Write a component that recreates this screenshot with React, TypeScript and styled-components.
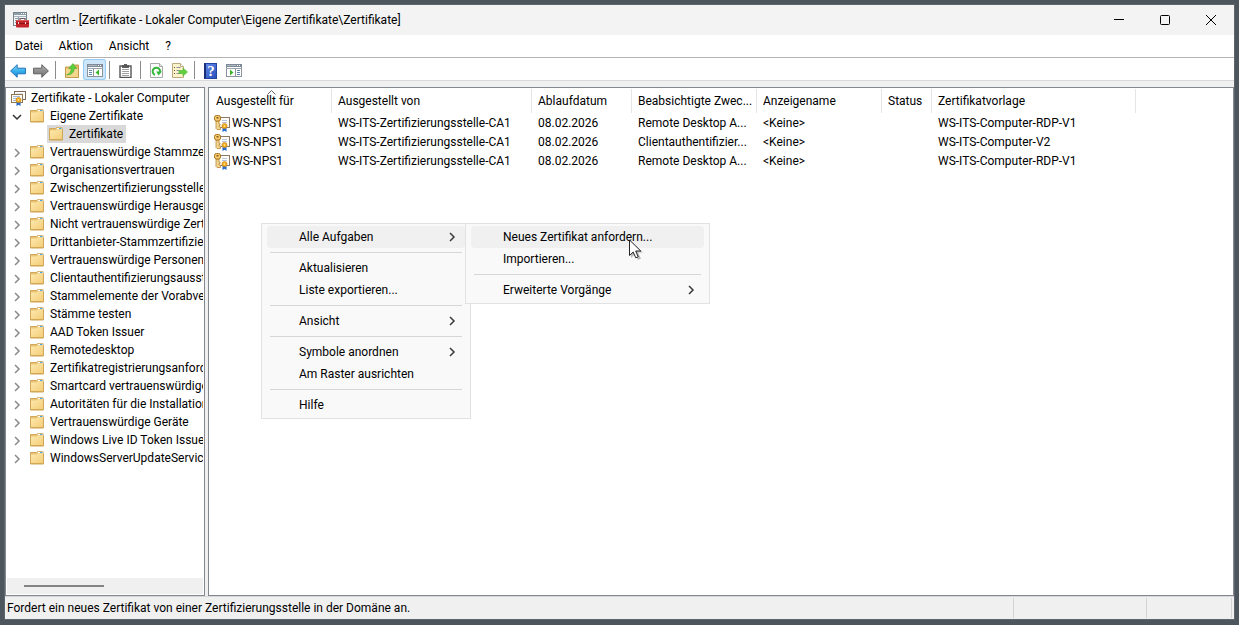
import React from "react";
import styled, { createGlobalStyle, css } from "styled-components";

const GlobalStyle = createGlobalStyle`
  * { box-sizing: border-box; }
  body { margin: 0; background: #4d565d; }
  body, button, table { font-family: Roboto, "Open Sans", sans-serif; font-size: 12px; color: #000; }
  button { border: 0; padding: 0; background: none; text-align: left; }
  ul { list-style: none; margin: 0; padding: 0; }
`;

/* ---------- icons ---------- */

const Icon = styled.svg`
  display: block;
  flex: none;
`;

const AppIcon = () => (
  <Icon width="16" height="16" viewBox="0 0 16 16">
    <rect x="0.5" y="0.5" width="13" height="13" fill="#f4f6f8" stroke="#77858f" />
    <rect x="1" y="1" width="12" height="2" fill="#8fa0ad" />
    <path d="M8 1.5h1M10 1.5h1M12 1.5h1" stroke="#fff" />
    <path d="M1 4.5h12" stroke="#a9b5be" />
    <path d="M2 6.5h3M2 8.5h2M2 10.5h2M5.5 5v8" stroke="#8a99a5" />
    <path d="M7 8V6.500h5V8" fill="none" stroke="#6d5a5e" strokeWidth="1.200" />
    <rect x="3" y="8" width="13" height="7.6" rx="1" fill="#c4252b" />
    <path d="M3.500 8.500h12" stroke="#e0595c" />
    <path d="M3 11.500h13" stroke="#8d1418" />
    <rect x="5" y="10" width="1" height="2" fill="#f3d9d9" />
    <rect x="12" y="10" width="1" height="2" fill="#f3d9d9" />
  </Icon>
);

const ArrowIcon = ({ forward }: { forward?: boolean }) => (
  <Icon width="16" height="14" viewBox="0 0 16 14">
    <defs>
      <linearGradient id={forward ? "fwd" : "back"} x1="0" y1="0" x2="0" y2="1">
        <stop offset="0" stopColor={forward ? "#b5b5b5" : "#8fdcfb"} />
        <stop offset="0.5" stopColor={forward ? "#8e8e8e" : "#35b0ec"} />
        <stop offset="1" stopColor={forward ? "#6e6e6e" : "#1b86d6"} />
      </linearGradient>
    </defs>
    <path
      d={forward ? "M15.4 7 8.800.7v3.500H.6v5.600h8.200v3.500z" : "M.6 7 7.200.7v3.500h8.200v5.600H7.200v3.500z"}
      fill={forward ? "url(#fwd)" : "url(#back)"}
      stroke={forward ? "#5f5f5f" : "#2272b8"}
      strokeLinejoin="round"
    />
  </Icon>
);

const FolderUpIcon = () => (
  <Icon width="14" height="15" viewBox="0 0 14 15">
    <path d="M.5 4h7l1-2h5v12.500H.5z" fill="#e2bb66" stroke="#c49b4c" />
    <path d="M1 5.500h12V14H1z" fill="#f4d68c" />
    <path d="M1.500 12c3.200-1 4.600-3.500 4.800-6.500H3.800L7.800.6l4 4.900H9.300C9 9.500 6.500 12 1.500 12z" fill="#5bd03f" stroke="#3a9e28" strokeWidth="0.500" />
  </Icon>
);

const PaneIcon = ({ right }: { right?: boolean }) => (
  <Icon width="16" height="13" viewBox="0 0 16 13">
    <rect x="0.500" y="0.500" width="15" height="12" fill="#fff" stroke="#8c939b" />
    <rect x="0" y="0" width="16" height="3" fill="#7f8a96" />
    <path d="M1 1.500h9" stroke="#aeb8c2" />
    <path d="M11 1.500h1M13 1.500h1" stroke="#fff" />
    <path d="M0 4.500h16" stroke="#9aa2aa" />
    {right ? (
      <>
        <path d="M9.500 5v7" stroke="#8c939b" />
        <path d="M11 6.500h3M11 8.500h3M11 10.500h3" stroke="#5f86b0" />
        <path d="M4 5.500v6l3.500-3z" fill="#3db52b" />
      </>
    ) : (
      <>
        <path d="M6.500 5v7" stroke="#8c939b" />
        <path d="M2 6.500h3M2 8.500h3M2 10.500h3" stroke="#5f86b0" />
        <path d="M12 5.500v6L8.500 8.500z" fill="#3db52b" />
      </>
    )}
  </Icon>
);

const ClipboardIcon = () => (
  <Icon width="13" height="14" viewBox="0 0 13 14">
    <rect x="1" y="2" width="11" height="11.500" fill="#fff" stroke="#555" strokeWidth="1.400" />
    <rect x="3" y="1" width="7" height="3" fill="#5a5a5a" />
    <rect x="5" y="0" width="3" height="1" fill="#5a5a5a" />
    <path d="M3 5.500h7M3 7.500h7M3 9.500h7M3 11.500h7" stroke="#a0a0a0" />
  </Icon>
);

const RefreshIcon = () => (
  <Icon width="13" height="15" viewBox="0 0 13 15">
    <path d="M.5.500h9l3 3v11H.5z" fill="#fdfdfd" stroke="#a9a9a9" />
    <path d="M9.500.500v3h3" fill="#e6e6e6" stroke="#a9a9a9" />
    <path d="M5 11.800A3.700 3.700 0 1 1 9.800 9.800" fill="none" stroke="#35b83a" strokeWidth="2" />
    <path d="M6.200 8.600h5.600L8.600 12.500z" fill="#35b83a" />
  </Icon>
);

const ExportIcon = () => (
  <Icon width="16" height="15" viewBox="0 0 16 15">
    <path d="M.5.500h8l3 3v11H.5z" fill="#fdf3c9" stroke="#b9ab7f" />
    <path d="M8.500.500v3h3" fill="#fff" stroke="#b9ab7f" />
    <path d="M2 4.500h1M2 7.500h1M2 10.500h1" stroke="#55504a" />
    <path d="M4.500 4.500h4M4.500 7.500h3M4.500 10.500h4" stroke="#8d8fa5" />
    <path d="M7 7.500h4V5l4.500 4-4.500 4v-2.500H7z" fill="#63d13f" stroke="#4bb534" strokeWidth="0.600" />
  </Icon>
);

const HelpBox = styled.span`
  display: grid;
  place-items: center;
  width: 13px;
  height: 16px;
  border: 1px solid #2343a0;
  border-left: 2px solid #1a2f78;
  background: linear-gradient(135deg, #5f88e4, #2a4fbd);
  color: #fff;
  font: bold 15px/14px "Liberation Serif", serif;
`;

const FolderIcon = () => (
  <Icon width="16" height="16" viewBox="0 0 16 16">
    <defs>
      <linearGradient id="folder" x1="0" y1="0" x2="1" y2="1">
        <stop offset="0" stopColor="#fde9ae" />
        <stop offset="1" stopColor="#f3cd78" />
      </linearGradient>
    </defs>
    <path d="M1.500 14V2.500h6l1-1h5.500v2h.5V14z" fill="#e9c472" stroke="#cfa65a" />
    <path d="M9 2.500h5" stroke="#fff" strokeWidth="1.400" />
    <path d="M11 2.500h2.500" stroke="#4aa3dd" />
    <path d="M2 4.500h5.500l1-1H14V13.500H2z" fill="url(#folder)" />
    <path d="M1 13.500h14" stroke="#d3a855" />
  </Icon>
);

const Ribbon = () => (
  <>
    <path d="M8.500 11.500V16l2-1.300 2 1.300v-4.500z" fill="#2468cc" />
    <circle cx="10.500" cy="10" r="2.600" fill="#f0a91e" stroke="#c98a1c" strokeWidth="0.600" />
    <circle cx="10.500" cy="10" r="0.900" fill="#ffdf80" />
  </>
);

const CertStoreIcon = () => (
  <Icon width="16" height="16" viewBox="0 0 16 16">
    <rect x="4.500" y="1.500" width="11" height="8" fill="#fff" stroke="#7d6a58" />
    <path d="M6 3.500h7" stroke="#dfe3ea" />
    <rect x="1.500" y="4.500" width="11" height="8" fill="#fffdf6" stroke="#94774f" />
    <path d="M3 6.500h7M3 8.500h5M3 10.500h3" stroke="#9db8dc" />
    <g transform="translate(-2)"><Ribbon /></g>
  </Icon>
);

const CertIcon = () => (
  <Icon width="16" height="17" viewBox="0 0 16 17">
    <rect x="4.500" y="2.500" width="11" height="10" fill="#fffdf8" stroke="#8d7866" />
    <path d="M8 5.500h5M8 7.500h5" stroke="#b9c4de" />
    <path d="M2 6h3v3h1v1.500H5V12h1.500v2.500H3L2 13.500z" fill="#f3d68f" stroke="#b5863a" strokeWidth="0.800" />
    <rect x="0.500" y="0.500" width="6" height="5.500" rx="2" fill="#f6cd72" stroke="#a9741c" />
    <rect x="2.500" y="2" width="2" height="1.500" fill="#8a5a12" />
    <g transform="translate(0 1)"><Ribbon /></g>
  </Icon>
);

const Chevron = ({ open, color }: { open?: boolean; color: string }) => (
  <Icon width="10" height="10" viewBox="0 0 10 10">
    <path d={open ? "M1 3l4 4 4-4" : "M3 1l4 4-4 4"} fill="none" stroke={color} strokeWidth="1.500" />
  </Icon>
);

/* ---------- window ---------- */

const Desktop = styled.div`
  display: flex;
  min-height: 100vh;
  padding: 5px 5px 6px;
  background: #4d565d;
`;

const Window = styled.main`
  position: relative;
  flex: 1;
  min-width: 0;
  display: flex;
  flex-direction: column;
  background: #f0f0f0;
  box-shadow: 0 0 0 1px #5d666c;
`;

const TitleBar = styled.header`
  display: flex;
  align-items: center;
  height: 30px;
  padding-left: 8px;
  gap: 6px;
  background: #f3f3f3;
`;

const Title = styled.h1`
  flex: 1;
  margin: 0;
  font-size: 12px;
  font-weight: 400;
  line-height: 16px;
  white-space: nowrap;
`;

const WindowButton = styled.button`
  display: grid;
  place-items: center;
  width: 46px;
  height: 30px;
`;

const Controls = styled.div`
  display: flex;
`;

const MenuBar = styled.nav`
  display: flex;
  height: 23px;
  padding-left: 2px;
  background: #fff;
  border-bottom: 1px solid #b4b4b4;
`;

const MenuBarItem = styled.button`
  padding: 0 8px;
  line-height: 22px;
`;

const ToolBar = styled.div`
  display: flex;
  align-items: flex-end;
  height: 23px;
  padding: 0 1px;
  background: #fff;
  border-bottom: 1px solid #d9d9d9;
`;

const ToolButton = styled.button<{ $active?: boolean }>`
  display: grid;
  place-items: center;
  width: 23px;
  height: 21px;
  padding-top: 2px;
  border-radius: 3px;
  ${(p) => p.$active && css`
    background: #cde6f9;
    box-shadow: inset 0 0 0 1px #98ccf3;
  `}
`;

const ToolDivider = styled.span`
  width: 1px;
  height: 18px;
  margin: 0 4px 1px 3px;
  background: #8c8c8c;
`;

const Panels = styled.div`
  flex: 1;
  display: flex;
  gap: 3px;
  padding-top: 6px;
  min-height: 0;
`;

const TreePanel = styled.aside`
  display: flex;
  flex-direction: column;
  flex: none;
  width: 200px;
  padding: 1px;
  background: #fff;
  border: 1px solid #828790;
`;

const Tree = styled.ul`
  flex: 1;
  overflow: hidden;
`;

const TreeRow = styled.li<{ $level: number }>`
  display: flex;
  align-items: center;
  height: 18px;
  padding-left: ${(p) => [3, 5, 40][p.$level]}px;
  white-space: nowrap;
`;

const TreeToggle = styled.button`
  padding-top: 1px;
  margin-right: 7px;
`;

const TreeLabel = styled.span<{ $selected?: boolean }>`
  display: flex;
  align-items: center;
  gap: 5px;
  height: 18px;
  line-height: 18px;
  ${(p) => p.$selected && css`
    padding: 0 3px 0 1px;
    background: #d9d9d9;
  `}
`;

const ScrollTrack = styled.div`
  height: 16px;
  padding: 7px 17px;
  background: #f0f0f0;
`;

const ScrollThumb = styled.div`
  width: 80px;
  height: 2px;
  background: #858585;
`;

const ListPanel = styled.section`
  flex: 1;
  min-width: 0;
  overflow: hidden;
  background: #fff;
  border: 1px solid #828790;
`;

const CertTable = styled.table`
  table-layout: fixed;
  width: 927px;
  border-collapse: collapse;
`;

const Col = styled.col<{ $width: number }>`
  width: ${(p) => p.$width}px;
`;

const HeadCell = styled.th`
  position: relative;
  height: 26px;
  padding: 0 6px;
  font-weight: 400;
  text-align: left;
  white-space: nowrap;
  background: linear-gradient(#e5e5e5, #e5e5e5) right 1px / 1px 24px no-repeat;

  &:first-child { padding-left: 7px; }
`;

const SortMark = styled.svg`
  position: absolute;
  top: 2px;
  left: 58px;
`;

const Cell = styled.td`
  height: 19px;
  padding: 0 6px;
  line-height: 19px;
  white-space: nowrap;

  &:first-child { padding-left: 5px; }
`;

const NameCell = styled.div`
  display: flex;
  align-items: center;
  gap: 2px;
`;

const StatusBar = styled.footer`
  display: flex;
  align-items: center;
  height: 23px;
  padding-right: 2px;
  background: #f0f0f0;
  border-top: 1px solid #d7d7d7;
`;

const StatusText = styled.span`
  flex: 1;
  padding-left: 2px;
  line-height: 20px;
`;

const StatusCell = styled.span<{ $width: number }>`
  width: ${(p) => p.$width}px;
  height: 20px;
  border-left: 1px solid #d4d4d4;
`;

/* ---------- context menus ---------- */

const Menu = styled.div<{ $x: number; $y: number; $width: number }>`
  position: absolute;
  left: ${(p) => p.$x}px;
  top: ${(p) => p.$y}px;
  width: ${(p) => p.$width}px;
  padding: 2px 5px;
  background: #f9f9f9;
  border: 1px solid #e2e2e2;
`;

const MenuItem = styled.button<{ $hot?: boolean }>`
  display: flex;
  align-items: center;
  justify-content: space-between;
  width: 100%;
  height: 22px;
  padding: 0 8px 0 32px;
  border-radius: 4px;
  background: ${(p) => (p.$hot ? "#f0f0f0" : "transparent")};
  white-space: nowrap;
`;

const MenuLine = styled.hr`
  height: 1px;
  margin: 4px 3px;
  border: 0;
  background: #d7d7d7;
`;

const Pointer = styled.svg`
  position: absolute;
  left: 623px;
  top: 234px;
`;

const nodes = [
  "Vertrauenswürdige Stammzer",
  "Organisationsvertrauen",
  "Zwischenzertifizierungsstellen",
  "Vertrauenswürdige Herausgeb",
  "Nicht vertrauenswürdige Zert",
  "Drittanbieter-Stammzertifizie",
  "Vertrauenswürdige Personen",
  "Clientauthentifizierungsausst",
  "Stammelemente der Vorabve",
  "Stämme testen",
  "AAD Token Issuer",
  "Remotedesktop",
  "Zertifikatregistrierungsanford",
  "Smartcard vertrauenswürdige",
  "Autoritäten für die Installation",
  "Vertrauenswürdige Geräte",
  "Windows Live ID Token Issuer",
  "WindowsServerUpdateService",
];

const columns: [string, number][] = [
  ["Ausgestellt für", 123],
  ["Ausgestellt von", 200],
  ["Ablaufdatum", 100],
  ["Beabsichtigte Zwec...", 125],
  ["Anzeigename", 125],
  ["Status", 50],
  ["Zertifikatvorlage", 204],
];

const certs = [
  { purpose: "Remote Desktop A...", template: "WS-ITS-Computer-RDP-V1" },
  { purpose: "Clientauthentifizier...", template: "WS-ITS-Computer-V2" },
  { purpose: "Remote Desktop A...", template: "WS-ITS-Computer-RDP-V1" },
];

type Entry = { label: string; sub?: boolean; hot?: boolean } | null;

const mainMenu: Entry[] = [
  { label: "Alle Aufgaben", sub: true, hot: true },
  null,
  { label: "Aktualisieren" },
  { label: "Liste exportieren..." },
  null,
  { label: "Ansicht", sub: true },
  null,
  { label: "Symbole anordnen", sub: true },
  { label: "Am Raster ausrichten" },
  null,
  { label: "Hilfe" },
];

const taskMenu: Entry[] = [
  { label: "Neues Zertifikat anfordern...", hot: true },
  { label: "Importieren..." },
  null,
  { label: "Erweiterte Vorgänge", sub: true },
];

const ContextMenu = ({ x, y, width, entries }: { x: number; y: number; width: number; entries: Entry[] }) => (
  <Menu role="menu" $x={x} $y={y} $width={width}>
    {entries.map((e, i) =>
      e ? (
        <MenuItem key={i} role="menuitem" $hot={e.hot}>
          {e.label}
          {e.sub && <Chevron color="#3a3a3a" />}
        </MenuItem>
      ) : (
        <MenuLine key={i} />
      )
    )}
  </Menu>
);

export default function App() {
  return (
    <Desktop>
      <GlobalStyle />
      <Window>
        <TitleBar>
          <AppIcon />
          <Title>certlm - [Zertifikate - Lokaler Computer\Eigene Zertifikate\Zertifikate]</Title>
          <Controls>
            <WindowButton aria-label="Minimieren">
              <Icon width="10" height="10"><path d="M0 4.500h10" stroke="#000" /></Icon>
            </WindowButton>
            <WindowButton aria-label="Maximieren">
              <Icon width="10" height="10"><rect x="0.500" y="0.500" width="9" height="9" rx="1" fill="none" stroke="#000" /></Icon>
            </WindowButton>
            <WindowButton aria-label="Schließen">
              <Icon width="10" height="10"><path d="M0 0l10 10M10 0L0 10" stroke="#000" /></Icon>
            </WindowButton>
          </Controls>
        </TitleBar>

        <MenuBar>
          {["Datei", "Aktion", "Ansicht", "?"].map((m) => (
            <MenuBarItem key={m}>{m}</MenuBarItem>
          ))}
        </MenuBar>

        <ToolBar>
          <ToolButton aria-label="Zurück"><ArrowIcon /></ToolButton>
          <ToolButton aria-label="Vorwärts"><ArrowIcon forward /></ToolButton>
          <ToolDivider />
          <ToolButton aria-label="Nach oben"><FolderUpIcon /></ToolButton>
          <ToolButton aria-label="Konsolenstruktur" $active><PaneIcon /></ToolButton>
          <ToolDivider />
          <ToolButton aria-label="Einfügen"><ClipboardIcon /></ToolButton>
          <ToolDivider />
          <ToolButton aria-label="Aktualisieren"><RefreshIcon /></ToolButton>
          <ToolButton aria-label="Liste exportieren"><ExportIcon /></ToolButton>
          <ToolDivider />
          <ToolButton aria-label="Hilfe"><HelpBox>?</HelpBox></ToolButton>
          <ToolButton aria-label="Aktionsbereich"><PaneIcon right /></ToolButton>
        </ToolBar>

        <Panels>
          <TreePanel>
            <Tree>
              <TreeRow $level={0}>
                <TreeLabel><CertStoreIcon />Zertifikate - Lokaler Computer</TreeLabel>
              </TreeRow>
              <TreeRow $level={1}>
                <TreeToggle aria-label="Zuklappen"><Chevron open color="#333" /></TreeToggle>
                <TreeLabel><FolderIcon />Eigene Zertifikate</TreeLabel>
              </TreeRow>
              <TreeRow $level={2}>
                <TreeLabel $selected><FolderIcon />Zertifikate</TreeLabel>
              </TreeRow>
              {nodes.map((n) => (
                <TreeRow key={n} $level={1}>
                  <TreeToggle aria-label="Aufklappen"><Chevron color="#8a8a8a" /></TreeToggle>
                  <TreeLabel><FolderIcon />{n}</TreeLabel>
                </TreeRow>
              ))}
            </Tree>
            <ScrollTrack><ScrollThumb /></ScrollTrack>
          </TreePanel>

          <ListPanel>
            <CertTable>
              <colgroup>
                {columns.map(([name, width]) => <Col key={name} $width={width} />)}
              </colgroup>
              <thead>
                <tr>
                  {columns.map(([name], i) => (
                    <HeadCell key={name}>
                      {name}
                      {i === 0 && (
                        <SortMark width="9" height="5"><path d="M.5 4.500l4-4 4 4" fill="none" stroke="#666" /></SortMark>
                      )}
                    </HeadCell>
                  ))}
                </tr>
              </thead>
              <tbody>
                {certs.map((c, i) => (
                  <tr key={i}>
                    <Cell><NameCell><CertIcon />WS-NPS1</NameCell></Cell>
                    <Cell>WS-ITS-Zertifizierungsstelle-CA1</Cell>
                    <Cell>08.02.2026</Cell>
                    <Cell>{c.purpose}</Cell>
                    <Cell>&lt;Keine&gt;</Cell>
                    <Cell />
                    <Cell>{c.template}</Cell>
                  </tr>
                ))}
              </tbody>
            </CertTable>
          </ListPanel>
        </Panels>

        <StatusBar>
          <StatusText>Fordert ein neues Zertifikat von einer Zertifizierungsstelle in der Domäne an.</StatusText>
          <StatusCell $width={133} />
          <StatusCell $width={85} />
          <StatusCell $width={1} />
        </StatusBar>

        <ContextMenu x={256} y={218} width={210} entries={mainMenu} />
        <ContextMenu x={460} y={218} width={245} entries={taskMenu} />
        <Pointer width="16" height="22" viewBox="0 0 16 22">
          <path d="M3 3v16l4-4 3 6 3-1.500-3-6h5z" fill="#000" opacity="0.250" />
          <path d="M1.500 1v15.500l3.700-3.500 2.600 5.800 2.400-1-2.500-5.800h5.100z" fill="#fff" stroke="#222" />
        </Pointer>
      </Window>
    </Desktop>
  );
}
